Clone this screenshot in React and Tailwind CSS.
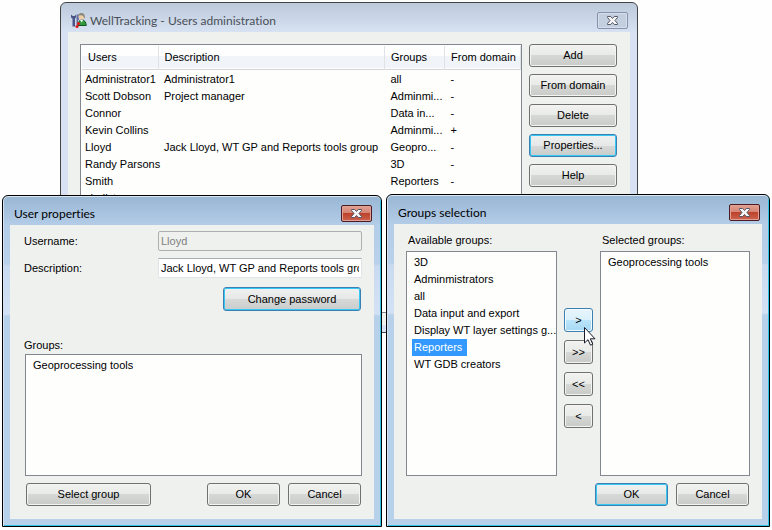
import React from 'react';

const USERS = [
  { name: 'Administrator1', description: 'Administrator1', groups: 'all', domain: '-' },
  { name: 'Scott Dobson', description: 'Project manager', groups: 'Adminmi...', domain: '-' },
  { name: 'Connor', description: '', groups: 'Data in...', domain: '-' },
  { name: 'Kevin Collins', description: '', groups: 'Adminmi...', domain: '+' },
  { name: 'Lloyd', description: 'Jack Lloyd, WT GP and Reports tools group', groups: 'Geopro...', domain: '-' },
  { name: 'Randy Parsons', description: '', groups: '3D', domain: '-' },
  { name: 'Smith', description: '', groups: 'Reporters', domain: '-' },
  { name: 'vladist', description: '', groups: 'Adm...', domain: '-' },
];

const AVAILABLE_GROUPS = [
  '3D',
  'Adminmistrators',
  'all',
  'Data input and export',
  'Display WT layer settings g...',
  'Reporters',
  'WT GDB creators',
];

const BUTTON_STYLES = {
  normal:
    'border-[#707070] bg-[linear-gradient(#f2f3f1,#e8eae8_50%,#d6d8d6_50%,#c9cbc8)] shadow-[inset_0_0_0_1px_#f4f5f3]',
  focused:
    'border-[#3c7fb1] bg-[linear-gradient(#f0f2f1,#e6e8e7_50%,#d6d9d8_50%,#c8cccb)] shadow-[inset_0_0_0_1px_#36c8f4]',
  hot:
    'border-[#3c7fb1] bg-[linear-gradient(#e8f5fc,#d9f0fc_50%,#bce5fb_50%,#a5d8f3)] shadow-[inset_0_0_0_1px_#f2fafe]',
};

const Button = ({ variant = 'normal', className = 'h-[23px]', children }) => (
  <button
    type="button"
    className={`flex items-center justify-center rounded-[3px] border ${BUTTON_STYLES[variant]} ${className}`}
  >
    {children}
  </button>
);

const CloseButton = ({ active = false }) => (
  <button
    type="button"
    aria-label="Close"
    className={`flex h-[17px] w-[31px] items-center justify-center rounded-[2px] border ${
      active
        ? 'border-[#4a1c22] bg-[linear-gradient(#e3a091,#d58575_45%,#bd3f27_45%,#cb6350)] shadow-[inset_0_0_0_1px_#e2a197]'
        : 'border-[#8791ad] bg-[#c3cfde] shadow-[inset_0_0_0_1px_#d6dfeb]'
    }`}
  >
    <svg width="13" height="11" viewBox="0 0 13 11" aria-hidden="true">
      <path
        d="M1.5 1.5h3.2l1.8 2 1.8-2h3.2v1L9 5.5l2.5 3v1H8.3l-1.8-2-1.8 2H1.5v-1L4 5.5l-2.5-3z"
        fill="#f6f6f6"
        stroke="#535666"
      />
    </svg>
  </button>
);

// Tools and person icon of the title bar
const AppIcon = () => (
  <svg width="17" height="17" viewBox="0 0 17 17" aria-hidden="true">
    <path d="M1 2.500v3l1.500 1v8h2.500v-8l1-1v-3L4.800 4h-2z" fill="#4a5488" />
    <path d="M6.500 2.500h2.500v5l-1 1v5H6.500z" fill="#6670a6" />
    <path d="M8 13.500q0-5.500 3.800-5.500 4 0 4.500 5.500z" fill="#2f9a3c" stroke="#155b24" />
    <path d="M10 8l1.800 2.500L13 8z" fill="#fff" />
    <circle cx="11.500" cy="4.500" r="3" fill="#efcfa6" />
    <path d="M8.500 4Q8.500 1 11.500 1T15 5l-1 2q.3-3-1.500-3.500Q9.500 3 8.500 4z" fill="#85877c" />
    <circle cx="8.500" cy="11.500" r="1.600" fill="#e11b1b" />
    <circle cx="7" cy="14.500" r="1.600" fill="#e11b1b" />
  </svg>
);

const ListBox = ({ label, items, selected, className = '' }) => (
  <ul
    role="listbox"
    aria-label={label}
    className={`border border-[#828790] bg-[#fefefd] py-[2px] pl-[5px] ${className}`}
  >
    {items.map((item) => (
      <li
        key={item}
        role="option"
        aria-selected={item === selected}
        className={`w-fit pl-[2px] leading-[17px] whitespace-nowrap ${
          item === selected ? 'bg-[#3399ff] pr-[5px] text-white' : ''
        }`}
      >
        {item}
      </li>
    ))}
  </ul>
);

// Foreground window with the blue glass frame
const Dialog = ({ title, className, children }) => (
  <section
    aria-label={title}
    className={`absolute flex flex-col rounded-t-[6px] border border-black bg-[linear-gradient(#98b6d3,#b4cde8_30px,#b9d1ea_68px,#c9daf0_70px,#d3e1f5_118px,#b7d1ea_120px)] px-[7px] pb-[7px] shadow-[inset_0_1px_0_#dbe8f4,inset_1px_0_0_#d5e4f2,inset_-1px_-1px_0_#2fc3e6] ${className}`}
  >
    <header className="flex h-[29px] items-center justify-between pt-[6px] pr-[2px] pl-[4px]">
      <h2 className="font-['Lato',sans-serif] text-[12px] leading-[16px] [font-variant-ligatures:none]">{title}</h2>
      <CloseButton active />
    </header>
    <div className="flex flex-1 flex-col bg-[#eff1ef]">{children}</div>
  </section>
);

const UsersWindow = () => (
  <section
    aria-label="Users administration"
    className="absolute top-[2px] left-[60px] flex h-[331px] w-[578px] flex-col rounded-t-[6px] border border-[#444] bg-linear-to-b from-[#bccadb] to-[#d8e2f2] to-[30px] px-[7px] pb-[7px]"
  >
    <header className="flex h-[29px] items-center pt-[6px] pr-[2px] pl-[2px]">
      <AppIcon />
      <h1 className="ml-[3px] flex-1 font-['Lato',sans-serif] text-[12px] leading-[16px] text-[#4a4f57] [font-variant-ligatures:none]">
        WellTracking - Users administration
      </h1>
      <CloseButton />
    </header>
    <div className="flex flex-1 gap-[7px] bg-[#eff1ef] pt-[12px] pr-[13px] pl-[12px]">
      <div className="h-[269px] flex-1 overflow-hidden border border-[#828790] bg-[#fefefd] pt-px pl-px">
        <table className="w-full table-fixed border-collapse text-left">
          <colgroup>
            <col className="w-[76px]" />
            <col />
            <col className="w-[60px]" />
            <col className="w-[76px]" />
          </colgroup>
          <thead>
            <tr className="h-[23px] border-b border-[#d5d5d5] bg-[linear-gradient(#fefefe_45%,#f1f5f9_45%)]">
              <th className="border-r border-[#e0e3e6] pl-[6px] font-normal">Users</th>
              <th className="border-r border-[#e0e3e6] pl-[6px] font-normal">Description</th>
              <th className="border-r border-[#e0e3e6] pl-[6px] font-normal">Groups</th>
              <th className="border-r border-[#e0e3e6] pl-[6px] font-normal whitespace-nowrap">From domain</th>
            </tr>
            <tr className="h-[2px]" />
          </thead>
          <tbody>
            {USERS.map((user) => (
              <tr key={user.name} className="h-[17px] whitespace-nowrap">
                <td className="pl-[3px]">{user.name}</td>
                <td className="pl-[6px]">{user.description}</td>
                <td className="pl-[6px]">{user.groups}</td>
                <td className="pl-[6px]">{user.domain}</td>
              </tr>
            ))}
          </tbody>
        </table>
      </div>
      <div className="flex w-[88px] flex-col gap-[7px]">
        <Button>Add</Button>
        <Button>From domain</Button>
        <Button>Delete</Button>
        <Button variant="focused">Properties...</Button>
        <Button>Help</Button>
      </div>
    </div>
  </section>
);

const UserProperties = () => (
  <Dialog title="User properties" className="top-[195px] left-[2px] h-[332px] w-[380px]">
    <div className="flex flex-1 flex-col pt-[6px] pr-[12px] pb-[13px] pl-[14px]">
      <div className="flex items-center justify-between">
        <label htmlFor="username">Username:</label>
        <input
          id="username"
          disabled
          defaultValue="Lloyd"
          className="h-[20px] w-[204px] rounded-[2px] border border-[#afafaf] bg-[#eff1ef] px-[2px] text-[#808080]"
        />
      </div>
      <div className="mt-[7px] flex items-center justify-between">
        <label htmlFor="description">Description:</label>
        <input
          id="description"
          defaultValue="Jack Lloyd, WT GP and Reports tools group"
          className="h-[20px] w-[204px] border border-[#e2e3ea] border-t-[#abadb3] bg-white px-[2px]"
        />
      </div>
      <Button variant="focused" className="mt-[9px] mr-px h-[24px] w-[138px] self-end">
        Change password
      </Button>
      <p className="mt-auto leading-[16px]">Groups:</p>
      <ListBox label="Groups" items={['Geoprocessing tools']} className="mt-px ml-px h-[122px]" />
      <div className="mt-[7px] flex gap-[8px] pr-px pl-[2px]">
        <Button className="mr-auto h-[23px] w-[125px]">Select group</Button>
        <Button className="h-[23px] w-[73px]">OK</Button>
        <Button className="h-[23px] w-[73px]">Cancel</Button>
      </div>
    </div>
  </Dialog>
);

const GroupsSelection = () => (
  <Dialog title="Groups selection" className="top-[194px] left-[386px] h-[333px] w-[384px]">
    <div className="flex flex-1 flex-col px-[12px] pt-[8px] pb-[13px]">
      <div className="flex flex-1 gap-[7px]">
        <div className="flex w-[151px] flex-col">
          <p className="pl-[2px] leading-[16px]">Available groups:</p>
          <ListBox
            label="Available groups"
            items={AVAILABLE_GROUPS}
            selected="Reporters"
            className="mt-[3px] flex-1"
          />
        </div>
        <div className="flex w-[29px] flex-col gap-[8px] pt-[76px]">
          <Button variant="hot" className="h-[24px]">&gt;</Button>
          <Button className="h-[24px]">&gt;&gt;</Button>
          <Button className="h-[24px]">&lt;&lt;</Button>
          <Button className="h-[24px]">&lt;</Button>
        </div>
        <div className="flex flex-1 flex-col">
          <p className="pl-[2px] leading-[16px]">Selected groups:</p>
          <ListBox label="Selected groups" items={['Geoprocessing tools']} className="mt-[3px] flex-1" />
        </div>
      </div>
      <div className="mt-[7px] flex justify-end gap-[8px] pr-px">
        <Button variant="focused" className="h-[23px] w-[73px]">OK</Button>
        <Button className="h-[23px] w-[73px]">Cancel</Button>
      </div>
    </div>
  </Dialog>
);

const Cursor = () => (
  <svg className="absolute top-[327px] left-[584px]" width="13" height="20" viewBox="0 0 13 20" aria-hidden="true">
    <path d="M.5.5v15.500l3.500-3.300 2.500 5.500 2.300-1-2.500-5.400H11z" fill="#fff" stroke="#1b1b2b" />
  </svg>
);

const App = () => (
  <main className="relative h-screen overflow-hidden bg-[#fefefe] font-['Liberation_Sans',Arial,sans-serif] text-[11px] text-black">
    <UsersWindow />
    <UserProperties />
    <GroupsSelection />
    <Cursor />
  </main>
);

export default App;
